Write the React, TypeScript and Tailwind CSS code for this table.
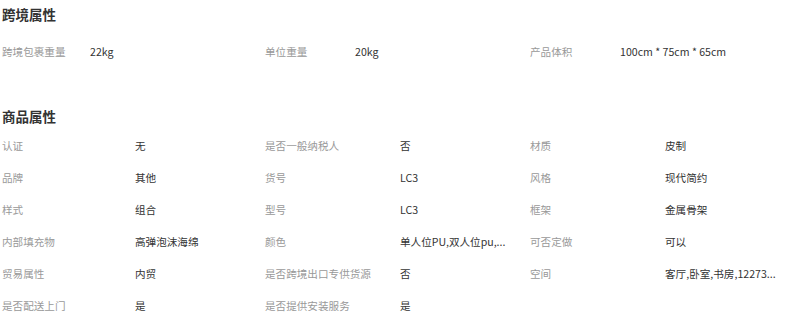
const crossBorder = [
  { label: "跨境包裹重量", value: "22kg" },
  { label: "单位重量", value: "20kg" },
  { label: "产品体积", value: "100cm * 75cm * 65cm" },
];

const goods = [
  { label: "认证", value: "无" },
  { label: "是否一般纳税人", value: "否" },
  { label: "材质", value: "皮制" },
  { label: "品牌", value: "其他" },
  { label: "货号", value: "LC3" },
  { label: "风格", value: "现代简约" },
  { label: "样式", value: "组合" },
  { label: "型号", value: "LC3" },
  { label: "框架", value: "金属骨架" },
  { label: "内部填充物", value: "高弹泡沫海绵" },
  { label: "颜色", value: "单人位PU,双人位pu,..." },
  { label: "可否定做", value: "可以" },
  { label: "贸易属性", value: "内贸" },
  { label: "是否跨境出口专供货源", value: "否" },
  { label: "空间", value: "客厅,卧室,书房,12273..." },
  { label: "是否配送上门", value: "是" },
  { label: "是否提供安装服务", value: "是" },
];

const App = () => {
  return (
    <div
      className="w-[800px] h-[317px] overflow-hidden bg-white pl-[2px] text-[10.6px]"
      style={{ fontFamily: '"Noto Sans CJK SC", "Liberation Sans", sans-serif' }}
    >
      <h2 className="h-[28px] leading-[28px] text-[13.5px] font-bold text-[#333]">
        跨境属性
      </h2>
      <div className="mt-[8px] grid grid-cols-[263px_265px_265px]">
        {crossBorder.map((item, index) => (
          <div key={index} className="flex h-[32px] items-center">
            <span
              className={`${index === 0 ? "w-[88px]" : "w-[90px]"} shrink-0 text-[#999]`}
            >
              {item.label}
            </span>
            <span className="text-[#333]">{item.value}</span>
          </div>
        ))}
      </div>

      <h2 className="mt-[34px] h-[28px] leading-[28px] text-[13.5px] font-bold text-[#333]">
        商品属性
      </h2>
      <div className="grid grid-cols-[263px_265px_265px]">
        {goods.map((item, index) => (
          <div key={index} className="flex h-[32px] items-center">
            <span
              className={`${index % 3 === 0 ? "w-[133px]" : "w-[135px]"} shrink-0 whitespace-nowrap text-[#999]`}
            >
              {item.label}
            </span>
            <span className="whitespace-nowrap text-[#333]">{item.value}</span>
          </div>
        ))}
      </div>
    </div>
  );
};

export default App;
